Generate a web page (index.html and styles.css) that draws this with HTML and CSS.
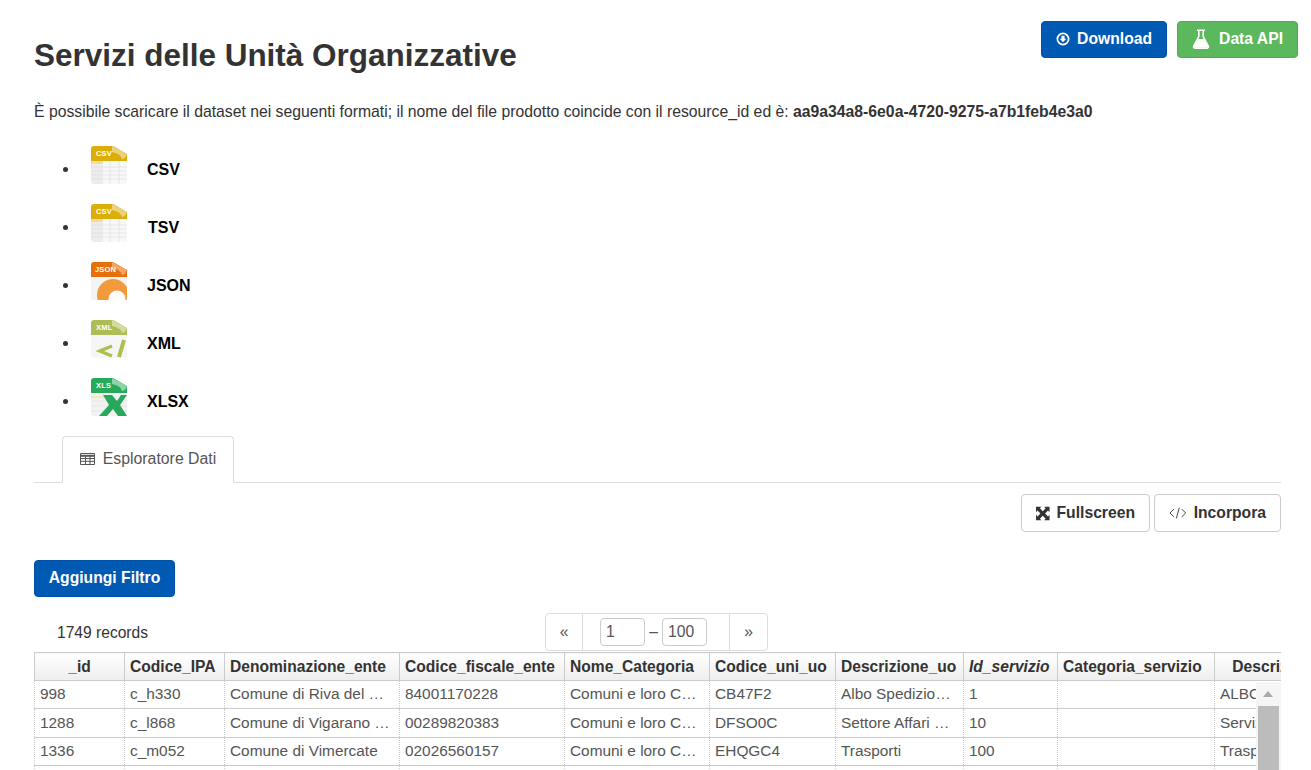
FILE: index.html
```html
<!DOCTYPE html>
<html lang="it">
<head>
<meta charset="utf-8">
<title>Servizi delle Unità Organizzative</title>
<link rel="stylesheet" href="styles.css">
</head>
<body>
<div class="page">
  <div class="actions">
    <a class="btn btn-primary"><svg class="ico" viewBox="0 0 14 14"><circle cx="7" cy="7" r="5.6" fill="none" stroke="#fff" stroke-width="1.8"/><path d="M5.4 3.8h3.2v3h1.7L7 10.3 3.7 6.8h1.7z" fill="#fff"/></svg>Download</a>
    <a class="btn btn-success"><svg class="ico ico-flask" viewBox="0 0 18 20"><path d="M5 1.200h8M6.800 1.200v6.400L1.700 17.200a1.300 1.300 0 0 0 1.100 1.900h12.400a1.300 1.300 0 0 0 1.100-1.900L11.200 7.600V1.200" fill="none" stroke="#fff" stroke-width="1.600"/><path d="M5.400 10h7.200l3.800 8.500H1.600z" fill="#fff"/></svg>Data API</a>
  </div>
  <h1 class="title">Servizi delle Unità Organizzative</h1>
  <p class="lead">È possibile scaricare il dataset nei seguenti formati; il nome del file prodotto coincide con il resource_id ed è: <strong>aa9a34a8-6e0a-4720-9275-a7b1feb4e3a0</strong></p>
  <ul class="formats">
    <li><svg class="fmt" viewBox="0 0 36 38"><rect y="12" width="36" height="26" rx="3" fill="#ececec"/><path d="M12 15h24v20a3 3 0 0 1-3 3H12z" fill="#f8f8f8"/><path d="M0 15h12v3H0z" fill="#f6dc9c"/><path d="M0 21h36M0 25h36M0 29h36M0 33h36M19 15v23M28 15v23" stroke="#dedede" stroke-width=".7"/><path d="M3 0h19l14 8v7H0V3a3 3 0 0 1 3-3z" fill="#dcae0a"/><path d="M21 0l15 8c-1 3-3 5-5 5-1-4-5-6-10-7z" fill="#ead27c"/><text x="5" y="10" class="fmt-txt">CSV</text></svg><b>CSV</b></li>
    <li><svg class="fmt" viewBox="0 0 36 38"><rect y="12" width="36" height="26" rx="3" fill="#ececec"/><path d="M12 15h24v20a3 3 0 0 1-3 3H12z" fill="#f8f8f8"/><path d="M0 15h12v3H0z" fill="#f6dc9c"/><path d="M0 21h36M0 25h36M0 29h36M0 33h36M19 15v23M28 15v23" stroke="#dedede" stroke-width=".7"/><path d="M3 0h19l14 8v7H0V3a3 3 0 0 1 3-3z" fill="#dcae0a"/><path d="M21 0l15 8c-1 3-3 5-5 5-1-4-5-6-10-7z" fill="#ead27c"/><text x="5" y="10" class="fmt-txt">CSV</text></svg><b class="shift">TSV</b></li>
    <li><svg class="fmt" viewBox="0 0 36 38"><rect y="10" width="36" height="28" rx="3" fill="#f4f4f4"/><circle cx="22" cy="33" r="16" fill="#f29a3c"/><circle cx="26" cy="37" r="8.500" fill="#fdfdfd"/><path d="M3 0h19l14 8v7H0V3a3 3 0 0 1 3-3z" fill="#e8700c"/><path d="M21 0l15 8c-1 3-3 5-5 5-1-4-5-6-10-7z" fill="#f2a564"/><text x="4" y="10" class="fmt-txt">JSON</text></svg><b>JSON</b></li>
    <li><svg class="fmt" viewBox="0 0 36 38"><rect y="10" width="36" height="28" rx="3" fill="#f6f6f6"/><path d="M21 26L9 31l12 5" fill="none" stroke="#aebf52" stroke-width="3.500"/><path d="M33 20l-5 17" stroke="#aebf52" stroke-width="4"/><path d="M3 0h19l14 8v7H0V3a3 3 0 0 1 3-3z" fill="#aebd55"/><path d="M21 0l15 8c-1 3-3 5-5 5-1-4-5-6-10-7z" fill="#d3dc9c"/><text x="5" y="10" class="fmt-txt">XML</text></svg><b>XML</b></li>
    <li><svg class="fmt" viewBox="0 0 36 38"><rect y="10" width="36" height="28" rx="3" fill="#f2f2f2"/><path d="M0 18h14v2H0z" fill="#f6e6b0"/><path d="M0 23h36M0 28h36M0 33h36" stroke="#e2e2e2" stroke-width=".7"/><path d="M12 17h9l5 6 4-6h6l-7 10 7 11h-9l-5-7-6 7H8l10-11z" fill="#27a85a"/><path d="M3 0h19l14 8v7H0V3a3 3 0 0 1 3-3z" fill="#25ab5b"/><path d="M21 0l15 8c-1 3-3 5-5 5-1-4-5-6-10-7z" fill="#8fd4a8"/><text x="5" y="10" class="fmt-txt">XLS</text></svg><b>XLSX</b></li>
  </ul>
  <div class="tabs">
    <div class="tab"><svg class="tab-ico" viewBox="0 0 15 12"><path d="M.5.5h14v11H.5z" fill="none" stroke="#555" stroke-width="1"/><path d="M.5 2.800h14" stroke="#555" stroke-width="2"/><path d="M1 5.500h13M1 8.300h13M5.500 3v8M10 3v8" stroke="#555" stroke-width="1"/></svg>Esploratore Dati</div>
  </div>
  <div class="tools">
    <a class="btn btn-default"><svg class="ico ico-full" viewBox="0 0 15 15"><path d="M0 0h6L4.300 1.700 7.500 4.900l3.200-3.200L9 0h6v6l-1.700-1.700-3.200 3.200 3.200 3.200L15 9v6H9l1.700-1.700-3.200-3.200-3.200 3.200L6 15H0V9l1.700 1.700 3.200-3.200-3.200-3.200L0 6z" fill="#333"/></svg>Fullscreen</a>
    <a class="btn btn-default"><svg class="ico ico-code" viewBox="0 0 18 14"><path d="M5 3L1 7l4 4M13 3l4 4-4 4M10.500 1.500l-3 11" fill="none" stroke="#444" stroke-width="1"/></svg>Incorpora</a>
  </div>
  <a class="btn btn-primary btn-filter">Aggiungi Filtro</a>
  <div class="pager-row">
    <span class="records">1749 records</span>
    <div class="pager">
      <span class="pg-end">«</span>
      <span class="pg-mid"><span class="pg-input">1</span><span class="pg-dash">–</span><span class="pg-input">100</span></span>
      <span class="pg-end">»</span>
    </div>
  </div>
  <div class="grid-wrap">
    <table class="grid">
      <colgroup>
        <col class="c1"><col class="c2"><col class="c3"><col class="c4"><col class="c5"><col class="c6"><col class="c7"><col class="c8"><col class="c9"><col class="c10">
      </colgroup>
      <thead>
        <tr><th class="ctr">_id</th><th>Codice_IPA</th><th>Denominazione_ente</th><th>Codice_fiscale_ente</th><th>Nome_Categoria</th><th>Codice_uni_uo</th><th>Descrizione_uo</th><th class="em">Id_servizio</th><th>Categoria_servizio</th><th class="ctr">Descrizione_servizio</th></tr>
      </thead>
      <tbody>
        <tr><td>998</td><td>c_h330</td><td>Comune di Riva del Garda</td><td>84001170228</td><td>Comuni e loro Consorzi</td><td>CB47F2</td><td>Albo Spedizionieri</td><td>1</td><td></td><td>ALBO SPEDIZIONIERI</td></tr>
        <tr><td>1288</td><td>c_l868</td><td>Comune di Vigarano Mainarda</td><td>00289820383</td><td>Comuni e loro Consorzi</td><td>DFSO0C</td><td>Settore Affari Generali</td><td>10</td><td></td><td>Servizi demografici</td></tr>
        <tr><td>1336</td><td>c_m052</td><td>Comune di Vimercate</td><td>02026560157</td><td>Comuni e loro Consorzi</td><td>EHQGC4</td><td>Trasporti</td><td>100</td><td></td><td>Trasporti pubblici</td></tr>
        <tr><td></td><td></td><td></td><td></td><td></td><td></td><td></td><td></td><td></td><td></td></tr>
      </tbody>
    </table>
    <div class="scrollbar"><span class="sb-arrow"></span><span class="sb-thumb"></span></div>
  </div>
</div>
</body>
</html>
```
FILE: styles.css
```css
* { box-sizing: border-box; }
html, body { margin: 0; height: 770px; overflow: hidden; background: #fff; }
body { font-family: "Liberation Sans", Arial, sans-serif; font-size: 15.700px; line-height: 20px; color: #333; }
.page { position: relative; padding: 0 30px 0 34px; height: 770px; overflow: hidden; }

.actions { position: absolute; top: 21px; right: 13px; display: flex; gap: 10px; }
.btn { display: inline-flex; align-items: center; justify-content: center; height: 37px; padding: 0 14px 2px; border-radius: 4px; border: 1px solid transparent; font-size: 15.700px; font-weight: 700; white-space: nowrap; }
.btn-primary { background: #0059b3; border-color: #0052a6; color: #fff; }
.btn-success { background: #5cb85c; border-color: #4cae4c; color: #fff; }
.btn-default { background: #fff; border-color: #ccc; color: #333; height: 38px; padding-bottom: 0; }
.ico { width: 14px; height: 14px; margin-right: 7px; }
.ico-flask { width: 18px; height: 20px; margin-right: 9px; }
.ico-code { width: 18px; height: 14px; margin-right: 7px; }
.ico-full { width: 15px; height: 15px; margin-right: 7px; }

.title { margin: 0; padding-top: 36px; font-size: 31.470px; line-height: 40px; font-weight: 700; }
.lead { margin: 0; padding-top: 26px; font-size: 15.760px; line-height: 20px; }
.formats { margin: 0; padding: 18px 0 0 45px; list-style: disc; height: 313px; }
.formats li { height: 58px; line-height: 58px; }
.formats li::marker { font-size: 16px; }
.fmt { width: 36px; height: 38px; vertical-align: middle; margin: 0 0 10px 12px; }
.formats b { font-size: 16px; color: #000; margin-left: 20px; vertical-align: middle; }
.formats b.shift { margin-left: 21px; }
.fmt-txt { font: 700 7.500px "Liberation Sans", Arial, sans-serif; fill: #fff; letter-spacing: .2px; }

.tabs { height: 47px; border-bottom: 1px solid #ddd; padding-left: 28px; margin-top: 1px; display: flex; }
.tab { height: 47px; width: 172px; padding-bottom: 2px; border: 1px solid #ddd; border-bottom-color: #fff; border-radius: 4px 4px 0 0; display: flex; align-items: center; justify-content: center; color: #555; font-size: 15.840px; background: #fff; }
.tab-ico { width: 15px; height: 12px; margin-right: 8px; }

.tools { display: flex; justify-content: flex-end; gap: 4px; margin-top: 11px; }
.tools .btn { width: 129px; }
.tools .btn + .btn { width: 127px; }
.btn-filter { display: flex; width: 141px; margin-top: 28px; }

.pager-row { position: relative; height: 55px; }
.records { position: absolute; left: 23px; top: 26px; font-size: 15.600px; }
.pager { position: absolute; left: 511px; top: 16px; width: 223px; height: 38px; display: flex; border: 1px solid #ddd; border-radius: 4px; background: #fff; z-index: 2; }
.pg-end { width: 37px; flex: none; display: flex; align-items: center; justify-content: center; color: #555; font-size: 15.700px; }
.pg-end:first-child { width: 36px; }
.pg-mid { flex: 1; display: flex; align-items: center; justify-content: center; padding-right: 5px; border-left: 1px solid #ddd; border-right: 1px solid #ddd; border-bottom: 1px solid #ddd; height: 37px; color: #555; }
.pg-input { display: block; width: 45px; height: 28px; line-height: 26px; border: 1px solid #ccc; border-radius: 4px; padding-left: 5px; font-size: 15.700px; color: #555; }
.pg-dash { width: 17px; text-align: center; font-size: 15.700px; }

.grid-wrap { position: relative; overflow: hidden; height: 118px; }
.grid { border-collapse: collapse; table-layout: fixed; width: 1370px; font-size: 15.400px; }
.c1 { width: 90px; } .c2 { width: 100px; } .c3 { width: 175px; } .c4 { width: 165px; } .c5 { width: 145px; }
.c6 { width: 126px; } .c7 { width: 128px; } .c8 { width: 94px; } .c9 { width: 157px; } .c10 { width: 190px; }
.grid th { height: 28px; padding: 0 5px; text-align: left; font-weight: 700; font-size: 15.600px; color: #333; background: linear-gradient(#fff, #eee); border: 1px solid #ccc; white-space: nowrap; overflow: hidden; }
.grid th.ctr { text-align: center; }
.grid th.em { font-style: italic; }
.grid td { height: 28px; padding: 0 5px 1px; color: #555; white-space: nowrap; overflow: hidden; text-overflow: ellipsis; border-top: 1px solid #ccc; border-bottom: 1px solid #ccc; border-left: 1px dotted #ccc; border-right: 1px dotted #ccc; }
.grid tbody tr:nth-child(2) td { height: 29px; }
.scrollbar { position: absolute; left: 1222px; top: 30px; width: 25px; bottom: 0; background: #f5f5f5; padding: 0 2px; }
.sb-arrow { display: block; height: 24px; position: relative; }
.sb-arrow::after { content: ""; position: absolute; left: 5px; top: 9px; border-left: 5px solid transparent; border-right: 5px solid transparent; border-bottom: 6px solid #aaa; }
.sb-thumb { display: block; height: 70px; background: #bcbcbc; }
```
